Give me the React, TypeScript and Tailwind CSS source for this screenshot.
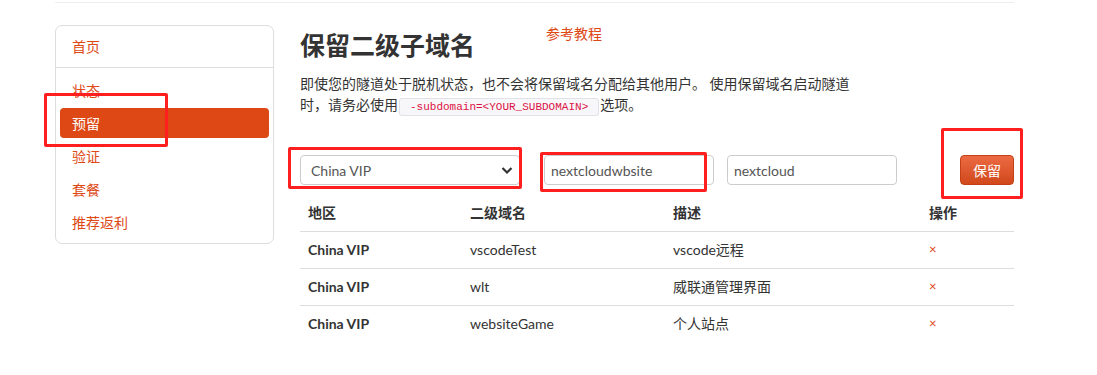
import React from 'react';

const navItems = ['状态', '预留', '验证', '套餐', '推荐返利'];

const rows = [
  { region: 'China VIP', sub: 'vscodeTest', desc: 'vscode远程' },
  { region: 'China VIP', sub: 'wlt', desc: '威联通管理界面' },
  { region: 'China VIP', sub: 'websiteGame', desc: '个人站点' },
];

const Sidebar: React.FC = () => (
  <div className="w-[219px] h-[219px] mt-[22px] shrink-0 border border-[#dddddd] rounded-[7px] bg-white">
    <div className="h-[42px] flex items-center pl-[16px] border-b border-[#dddddd] text-[#dd4814]">首页</div>
    <ul className="flex flex-col gap-[3px] pt-[7px] px-[4px]">
      {navItems.map((item) => (
        <li
          key={item}
          className={
            item === '预留'
              ? 'h-[30px] flex items-center pl-[12px] rounded-[4px] bg-[#dd4814] text-white'
              : 'h-[30px] flex items-center pl-[12px] text-[#dd4814]'
          }
        >
          {item}
        </li>
      ))}
    </ul>
  </div>
);

export default function App() {
  return (
    <div
      className="relative w-[1097px] h-[375px] bg-white text-[14px] text-[#333333] overflow-hidden"
      style={{ fontFamily: 'Lato, "Noto Sans CJK SC", sans-serif' }}
    >
      <div className="w-[959px] ml-[55px] mt-[2px] border-t border-[#eeeeee] flex">
        <Sidebar />

        {/* Main content */}
        <div className="ml-[26px] flex-1 flex flex-col">
          <div className="flex items-start mt-[27px] h-[30px]">
            <h1 className="text-[25px] leading-[30px] font-bold text-[#333333]">保留二级子域名</h1>
            <a className="ml-[71px] -mt-[6px] leading-[20px] text-[#dd4814]">参考教程</a>
          </div>

          <p className="mt-[13px] leading-[21px]">
            即使您的隧道处于脱机状态，也不会将保留域名分配给其他用户。 使用保留域名启动隧道
            <br />
            时，请务必使用
            <code
              className="mx-[1px] px-[10px] py-[2px] text-[11px] leading-[14px] text-[#dd1144] bg-[#f7f7f9] border border-[#e1e1e8] rounded-[3px]"
              style={{ fontFamily: '"Liberation Mono", monospace' }}
            >
              -subdomain=&lt;YOUR_SUBDOMAIN&gt;
            </code>
            选项。
          </p>

          <div className="flex items-center mt-[40px] h-[30px]">
            <div className="relative w-[220px] h-[30px]">
              <select className="appearance-none w-full h-full pl-[10px] border border-[#cccccc] rounded-[4px] bg-white text-[#555555] outline-none">
                <option>China VIP</option>
              </select>
              <svg
                className="absolute right-[7px] top-[10px] pointer-events-none"
                width="12"
                height="10"
                viewBox="0 0 12 10"
              >
                <path d="M1.5 3 L6 7.5 L10.5 3" fill="none" stroke="#333333" strokeWidth="2.2" />
              </svg>
            </div>
            <input
              readOnly
              value="nextcloudwbsite"
              className="ml-[24px] w-[170px] h-[30px] px-[6px] border border-[#cccccc] rounded-[4px] text-[#555555] outline-none"
            />
            <input
              readOnly
              value="nextcloud"
              className="ml-[13px] w-[170px] h-[30px] px-[6px] border border-[#cccccc] rounded-[4px] text-[#555555] outline-none"
            />
            <button className="ml-auto w-[54px] h-[30px] rounded-[4px] bg-linear-to-b from-[#ec6a42] to-[#d1481a] border border-[#c44115] text-white text-[14px]">
              保留
            </button>
          </div>

          <table className="mt-[10px] w-full border-collapse table-fixed">
            <colgroup>
              <col className="w-[162px]" />
              <col className="w-[203px]" />
              <col className="w-[256px]" />
              <col />
            </colgroup>
            <thead>
              <tr className="h-[36px] border-b border-[#dddddd]">
                <th className="text-left font-bold px-[8px]">地区</th>
                <th className="text-left font-bold px-[8px]">二级域名</th>
                <th className="text-left font-bold px-[8px]">描述</th>
                <th className="text-left font-bold px-[8px]">操作</th>
              </tr>
            </thead>
            <tbody>
              {rows.map((r, i) => (
                <tr key={r.sub} className={i < rows.length - 1 ? 'h-[37px] border-b border-[#dddddd]' : 'h-[37px]'}>
                  <td className="px-[8px] font-bold">{r.region}</td>
                  <td className="px-[8px]">{r.sub}</td>
                  <td className="px-[8px]">{r.desc}</td>
                  <td className="px-[8px] text-[13px] text-[#dd4814]">×</td>
                </tr>
              ))}
            </tbody>
          </table>
        </div>
      </div>

      {/* annotation boxes drawn over the screenshot */}
      <div className="absolute left-[44px] top-[93px] w-[124px] h-[54px] border-[3px] border-[#ff1f1f] rounded-[2px]" />
      <div className="absolute left-[288px] top-[147px] w-[234px] h-[42px] border-[3px] border-[#ff1f1f] rounded-[2px]" />
      <div className="absolute left-[540px] top-[152px] w-[167px] h-[40px] border-[3px] border-[#ff1f1f] rounded-[2px]" />
      <div className="absolute left-[941px] top-[128px] w-[82px] h-[71px] border-[3px] border-[#ff1f1f] rounded-[2px]" />
    </div>
  );
}
